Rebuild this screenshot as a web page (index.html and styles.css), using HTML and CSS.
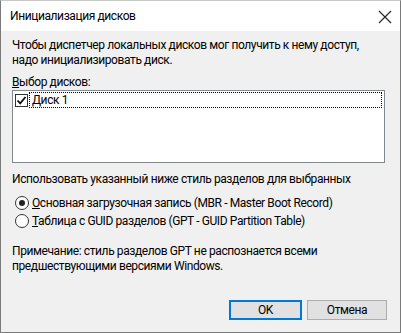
FILE: index.html
```html
<!DOCTYPE html>
<html lang="ru">
<head>
    <meta charset="UTF-8">
    <title>Инициализация дисков</title>
    <link rel="stylesheet" href="styles.css">
</head>
<body>
    <div class="window">
        <div class="titlebar">
            <span class="title">Инициализация дисков</span>
            <svg class="close" width="14" height="14" viewBox="0 0 14 14">
                <path d="M1 1 L13 13 M13 1 L1 13" stroke="#222" stroke-width="1.1" fill="none"/>
            </svg>
        </div>

        <div class="content">
            <p class="intro">Чтобы диспетчер локальных дисков мог получить к нему доступ,<br>надо инициализировать диск.</p>

            <div class="label"><u>В</u>ыбор дисков:</div>
            <div class="listbox">
                <div class="item">
                    <span class="checkbox">
                        <svg width="11" height="11" viewBox="0 0 11 11">
                            <path d="M1.5 5.5 L4.2 8.3 L9.5 2" stroke="#111" stroke-width="1.8" fill="none"/>
                        </svg>
                    </span>
                    <span class="item-text">Диск 1</span>
                </div>
            </div>

            <div class="style-label">Использовать указанный ниже стиль разделов для выбранных</div>
            <div class="radios">
                <div class="radio-row">
                    <span class="radio checked"></span>
                    <span><u>О</u>сновная загрузочная запись (MBR - Master Boot Record)</span>
                </div>
                <div class="radio-row">
                    <span class="radio"></span>
                    <span><u>Т</u>аблица с GUID разделов (GPT - GUID Partition Table)</span>
                </div>
            </div>

            <p class="note">Примечание: стиль разделов GPT не распознается всеми<br>предшествующими версиями Windows.</p>

            <div class="buttons">
                <button class="btn default">OK</button>
                <button class="btn cancel">Отмена</button>
            </div>
        </div>
    </div>
</body>
</html>
```

FILE: styles.css
```css
body {
    margin: 0;
    font-family: Roboto, "Noto Sans", sans-serif;
    font-size: 12px;
    letter-spacing: -0.4px;
    color: #000;
    background: #f0f0f0;
}
.window {
    width: 401px;
    height: 333px;
    box-sizing: border-box;
    border: 1px solid #7a7a7a;
    border-top-color: #c8c8c8;
    background-color: #f0f0f0;
    overflow: hidden;
}
.titlebar {
    height: 30px;
    background-color: #fff;
    display: flex;
    align-items: center;
    justify-content: space-between;
    padding: 0 8px 0 9px;
}
.title {
    font-size: 12px;
    line-height: 30px;
}
.close {
    margin-top: 1px;
}
.content {
    padding: 0 13px 0 11px;
    line-height: 15px;
}
.intro {
    margin: 7px 0 0;
}
.label {
    margin-top: 7px;
}
.listbox {
    margin-top: 0;
    height: 73px;
    box-sizing: border-box;
    border: 1px solid #828790;
    background-color: #fff;
    margin-right: 2px;
    padding: 1px 2px 0 2px;
}
.item {
    display: flex;
    align-items: center;
    height: 16px;
}
.checkbox {
    width: 11px;
    height: 11px;
    border: 1px solid #333;
    background: #fff;
    display: flex;
    align-items: center;
    justify-content: center;
    flex-shrink: 0;
}
.item-text {
    flex: 1;
    margin-left: 1px;
    padding-left: 2px;
    line-height: 14px;
    border: 1px dotted #000;
}
.style-label {
    margin-top: 9px;
}
.radios {
    margin-top: 7px;
    padding-left: 3px;
}
.radio-row {
    display: flex;
    align-items: center;
    height: 18px;
}
.radio {
    width: 12px;
    height: 12px;
    border: 1px solid #333;
    border-radius: 50%;
    background: #fff;
    margin-right: 3px;
    position: relative;
    flex-shrink: 0;
}
.radio.checked::after {
    content: "";
    position: absolute;
    left: 3px;
    top: 3px;
    width: 6px;
    height: 6px;
    border-radius: 50%;
    background: #222;
}
.note {
    margin: 14px 0 0;
}
.buttons {
    margin-top: 26px;
    display: flex;
    justify-content: flex-end;
    gap: 5px;
}
.btn {
    font-family: inherit;
    font-size: 12px;
    letter-spacing: inherit;
    height: 20px;
    padding: 0;
    background-color: #e1e1e1;
    border: 1px solid #adadad;
    color: #000;
}
.default {
    width: 73px;
    border: 2px solid #0078d7;
}
.cancel {
    width: 80px;
}
```
